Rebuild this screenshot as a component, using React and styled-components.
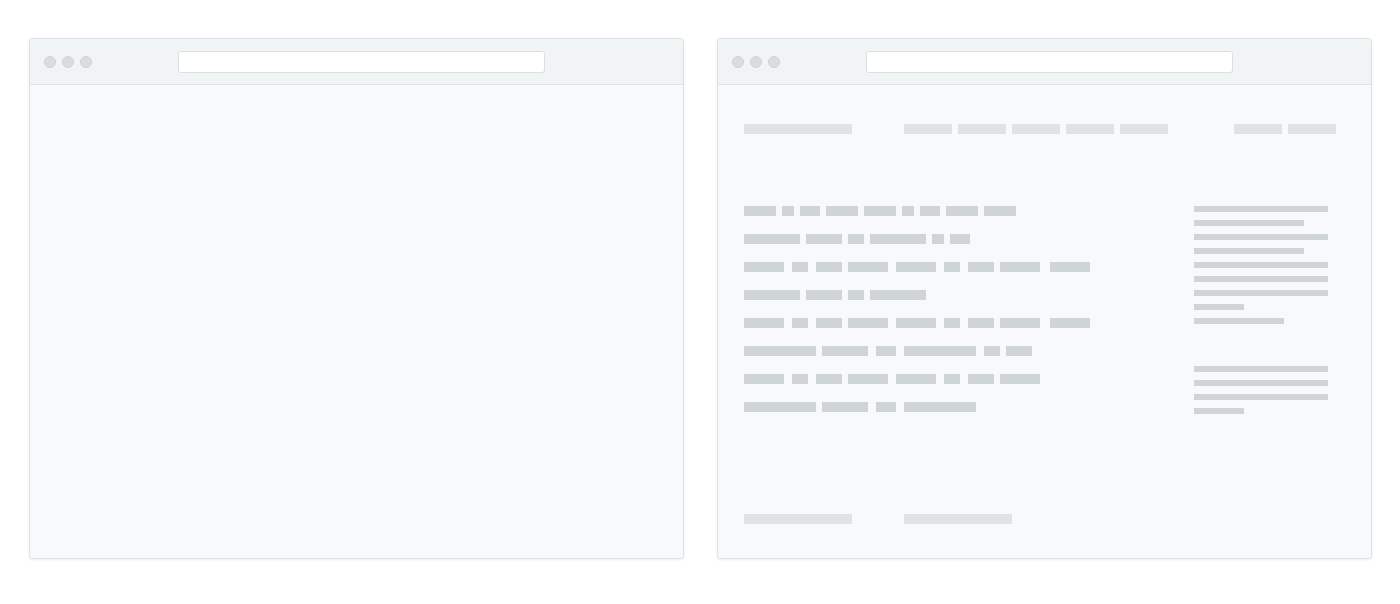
import React from "react";
import styled, { createGlobalStyle } from "styled-components";

const Global = createGlobalStyle`
  html, body { margin: 0; padding: 0; background: #ffffff; font-family: "Liberation Sans", Arial, sans-serif; }
`;

const Page = styled.div`
  display: flex;
  gap: 33px;
  padding: 38px 28px 0 29px;
  width: 1400px;
  height: 604px;
  box-sizing: border-box;
`;

const Window = styled.div`
  width: 655px;
  height: 521px;
  box-sizing: border-box;
  border: 1px solid #dfe2e4;
  border-radius: 3px;
  background: #f8f9fa;
  box-shadow: 0 1px 3px rgba(0, 0, 0, 0.07);
  display: flex;
  flex-direction: column;
  overflow: hidden;
`;

const TitleBar = styled.div`
  height: 44px;
  flex: none;
  background: #f1f4f5;
  border-bottom: 1px solid #dfe2e4;
  display: flex;
  align-items: center;
  padding-left: 14px;
  padding-top: 1px;
`;

const Dots = styled.div`
  display: flex;
  gap: 6px;
`;

const Dot = styled.span`
  width: 12px;
  height: 12px;
  box-sizing: border-box;
  border-radius: 50%;
  background: #dadddf;
  border: 1px solid #cfd3d5;
`;

const Address = styled.div`
  margin-left: 86px;
  width: 367px;
  height: 22px;
  box-sizing: border-box;
  background: #ffffff;
  border: 1px solid #dcdfe1;
  border-radius: 3px;
`;

const Body = styled.div`
  flex: 1;
  display: flex;
  flex-direction: column;
  padding: ${(p) => (p.$filled ? "39px 34px 34px 26px" : "0")};
`;

const Bar = styled.span`
  display: block;
  flex: none;
  height: ${(p) => p.$h || 10}px;
  width: ${(p) => p.$w}px;
  background: ${(p) => (p.$light ? "#e0e3e5" : "#cfd4d5")};
`;

const Nav = styled.div`
  display: flex;
  align-items: center;
`;

const NavGroup = styled.div`
  display: flex;
  gap: 6px;
  margin-left: ${(p) => p.$ml || 0}px;
`;

const Main = styled.div`
  display: flex;
  margin-top: 72px;
`;

const Article = styled.div`
  flex: 1;
  display: flex;
  flex-direction: column;
  gap: 18px;
`;

const Row = styled.div`
  position: relative;
  height: 10px;
`;

const Word = styled(Bar)`
  position: absolute;
  top: 0;
`;

const Sidebar = styled.div`
  width: 143px;
  display: flex;
  flex-direction: column;
  gap: 42px;
`;

const SideGroup = styled.div`
  display: flex;
  flex-direction: column;
  gap: 8px;
`;

const Footer = styled.div`
  margin-top: auto;
  display: flex;
  gap: 52px;
`;

const A = [[0, 32], [38, 12], [56, 20], [82, 32], [120, 32], [158, 12], [176, 20], [202, 32], [240, 32]];
const B = [[0, 56], [62, 36], [104, 16], [126, 56], [188, 12], [206, 20]];
const C = [[0, 40], [48, 16], [72, 26], [104, 40], [152, 40], [200, 16], [224, 26], [256, 40], [306, 40]];
const D = [[0, 56], [62, 36], [104, 16], [126, 56]];
const E = [[0, 72], [78, 46], [132, 20], [160, 72], [240, 16], [262, 26]];
const F = C.slice(0, 8);
const G = [[0, 72], [78, 46], [132, 20], [160, 72]];
const rows = [A, B, C, D, C, E, F, G];

const side1 = [134, 110, 134, 110, 134, 134, 134, 50, 90];
const side2 = [134, 134, 134, 50];

function Chrome() {
  return (
    <TitleBar>
      <Dots>
        <Dot />
        <Dot />
        <Dot />
      </Dots>
      <Address />
    </TitleBar>
  );
}

export default function App() {
  return (
    <>
      <Global />
      <Page>
        <Window>
          <Chrome />
          <Body />
        </Window>
        <Window>
          <Chrome />
          <Body $filled>
            <Nav>
              <Bar $light $w={108} />
              <NavGroup $ml={52}>
                {[0, 1, 2, 3, 4].map((i) => (
                  <Bar key={i} $light $w={48} />
                ))}
              </NavGroup>
              <NavGroup $ml={66}>
                <Bar $light $w={48} />
                <Bar $light $w={48} />
              </NavGroup>
            </Nav>
            <Main>
              <Article>
                {rows.map((r, i) => (
                  <Row key={i}>
                    {r.map(([x, w], j) => (
                      <Word key={j} $w={w} style={{ left: x }} />
                    ))}
                  </Row>
                ))}
              </Article>
              <Sidebar>
                <SideGroup>
                  {side1.map((w, i) => (
                    <Bar key={i} $h={6} $w={w} />
                  ))}
                </SideGroup>
                <SideGroup>
                  {side2.map((w, i) => (
                    <Bar key={i} $h={6} $w={w} />
                  ))}
                </SideGroup>
              </Sidebar>
            </Main>
            <Footer>
              <Bar $light $w={108} />
              <Bar $light $w={108} />
            </Footer>
          </Body>
        </Window>
      </Page>
    </>
  );
}
